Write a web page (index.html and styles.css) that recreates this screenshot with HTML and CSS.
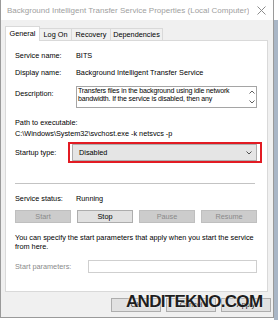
FILE: index.html
```html
<!DOCTYPE html>
<html lang="en">
<head>
  <meta charset="UTF-8" />
  <title>Background Intelligent Transfer Service Properties</title>
  <link rel="stylesheet" href="styles.css">
</head>
<body>

<div class="desktop">
  <div class="window">
    <div class="titlebar">
      <span class="title">Background Intelligent Transfer Service Properties (Local Computer)</span>
      <svg class="close" width="9" height="9" viewBox="0 0 9 9">
        <path d="M0.5 0.5 L8.5 8.5 M8.5 0.5 L0.5 8.5" stroke="#8c8c8c" stroke-width="1" fill="none"/>
      </svg>
    </div>

    <div class="tabs">
      <div class="tab active tab-general">General</div>
      <div class="tab tab-logon">Log On</div>
      <div class="tab tab-recovery">Recovery</div>
      <div class="tab tab-deps">Dependencies</div>
    </div>

    <div class="panel">
      <div class="row row-name">
        <span class="label">Service name:</span>
        <span class="value">BITS</span>
      </div>
      <div class="row row-display">
        <span class="label">Display name:</span>
        <span class="value">Background Intelligent Transfer Service</span>
      </div>
      <div class="row row-desc">
        <span class="label desc-label">Description:</span>
        <div class="desc-box">
          <div class="desc-text">Transfers files in the background using idle network bandwidth. If the service is disabled, then any</div>
          <div class="desc-scroll">
            <svg width="6" height="4" viewBox="0 0 6 4"><path d="M0.5 3.5 L3 1 L5.5 3.5" stroke="#606060" fill="none"/></svg>
            <svg width="6" height="4" viewBox="0 0 6 4"><path d="M0.5 0.5 L3 3 L5.5 0.5" stroke="#606060" fill="none"/></svg>
          </div>
        </div>
      </div>
      <div class="path-label">Path to executable:</div>
      <div class="path-value">C:\Windows\System32\svchost.exe -k netsvcs -p</div>
      <div class="row row-startup">
        <span class="label startup-label">Startup type:</span>
        <div class="highlight">
          <div class="select">
            <span>Disabled</span>
            <svg width="6" height="4" viewBox="0 0 6 4"><path d="M0.5 0.5 L3 3 L5.5 0.5" stroke="#505050" fill="none"/></svg>
          </div>
        </div>
      </div>
      <div class="separator"></div>
      <div class="row row-status">
        <span class="label">Service status:</span>
        <span class="value">Running</span>
      </div>
      <div class="service-buttons">
        <div class="btn disabled">Start</div>
        <div class="btn">Stop</div>
        <div class="btn disabled">Pause</div>
        <div class="btn disabled">Resume</div>
      </div>
      <p class="hint">You can specify the start parameters that apply when you start the service from here.</p>
      <div class="row row-params">
        <span class="label params-label">Start parameters:</span>
        <div class="params-input"></div>
      </div>
    </div>

    <div class="actions">
      <div class="btn">OK</div>
      <div class="btn">Cancel</div>
      <div class="btn">Apply</div>
    </div>

    <div class="watermark">ANDITEKNO.COM</div>
  </div>
  <div class="strip"></div>
</div>

</body>
</html>
```

FILE: styles.css
```css
body {
  margin: 0;
  padding: 0;
  background: #ffffff;
  font-family: "Liberation Sans", Arial, sans-serif;
  font-size: 7.3px;
  line-height: 9px;
  color: #000;
}

.desktop {
  display: flex;
  width: 278px;
  height: 320px;
  overflow: hidden;
}

.window {
  position: relative;
  width: 272px;
  height: 317px;
  background: #f0f0f0;
  border: 1px solid #9a9a9a;
  border-top: none;
}

.strip {
  margin-top: 20px;
  width: 4px;
  height: 300px;
  background: #a9b6c6;
}

/* title bar */
.titlebar {
  height: 20px;
  background: #ffffff;
  display: flex;
  align-items: center;
  padding: 0 7px 0 6px;
}

.title {
  font-size: 8px;
  color: #a0a0a0;
  white-space: nowrap;
  overflow: hidden;
}

.close {
  display: block;
  flex-shrink: 0;
  margin: 1px 0 0 auto;
}

/* tabs */
.tabs {
  display: flex;
  align-items: flex-end;
  height: 14px;
  margin-top: 6px;
  padding-left: 4px;
}

.tab {
  height: 12px;
  line-height: 12px;
  text-align: center;
  border: 1px solid #d9d9d9;
  border-bottom: none;
  border-left: none;
  box-sizing: border-box;
  background: #f0f0f0;
}

.tab.active {
  position: relative;
  z-index: 1;
  height: 15px;
  line-height: 14px;
  margin-bottom: -1px;
  background: #ffffff;
  border-left: 1px solid #d9d9d9;
}

.tab-general { width: 35px; }
.tab-logon { width: 32px; }
.tab-recovery { width: 39px; }
.tab-deps { width: 52px; }

/* panel */
.panel {
  margin-left: 4px;
  width: 263px;
  height: 252px;
  box-sizing: border-box;
  background: #ffffff;
  border: 1px solid #d9d9d9;
  padding: 0 10px 0 9px;
}

.row {
  display: flex;
  align-items: flex-start;
}

.label {
  width: 61px;
  flex-shrink: 0;
  white-space: nowrap;
}

.value {
  white-space: nowrap;
}

.row-name { margin-top: 10px; }
.row-display { margin-top: 8px; }

.row-desc {
  margin-top: 9px;
  height: 22px;
}

.desc-label {
  padding-top: 3px;
}

.desc-box {
  flex: 1;
  height: 22px;
  box-sizing: border-box;
  border: 1px solid #a5a5a5;
  display: flex;
}

.desc-text {
  flex: 1;
  padding: 0 0 0 1px;
  line-height: 8px;
  font-size: 7px;
  letter-spacing: -0.15px;
  overflow: hidden;
  height: 18px;
}

.desc-scroll {
  width: 9px;
  display: flex;
  flex-direction: column;
  justify-content: space-between;
  align-items: center;
  padding: 3px 0 3px;
}

.desc-scroll svg {
  display: block;
}

.path-label { margin-top: 10px; }
.path-value { margin-top: 2px; white-space: nowrap; }

.row-startup {
  margin-top: 4px;
  align-items: center;
}

.startup-label {
  width: 53px;
}

.highlight {
  width: 194px;
  height: 21px;
  margin-right: -5px;
  box-sizing: border-box;
  border: 2px solid #e21b23;
  padding: 0 3px 0 2px;
}

.select {
  height: 17px;
  box-sizing: border-box;
  background: #e5e5e5;
  border: 1px solid #adadad;
  display: flex;
  align-items: center;
  justify-content: space-between;
  padding: 0 4px 0 6px;
}

.select svg {
  display: block;
}

.separator {
  margin-top: 20px;
  width: 240px;
  height: 1px;
  background: #c3c3c3;
}

.row-status { margin-top: 10px; }

.service-buttons {
  margin-top: 7px;
  display: grid;
  grid-template-columns: repeat(4, 56px);
  gap: 6px;
}

.btn {
  height: 13px;
  line-height: 11px;
  box-sizing: border-box;
  text-align: center;
  background: #e1e1e1;
  border: 1px solid #adadad;
}

.btn.disabled {
  background: #cccccc;
  border-color: #bfbfbf;
  color: #8a8a8a;
}

.hint {
  margin: 10px 0 0;
  line-height: 9px;
}

.row-params {
  margin-top: 9px;
  align-items: center;
}

.params-label {
  width: 73px;
  color: #8a8a8a;
}

.params-input {
  flex: 1;
  height: 13px;
  box-sizing: border-box;
  border: 1px solid #cfcfcf;
  background: #ffffff;
}

/* dialog buttons */
.actions {
  margin-top: 6px;
  display: flex;
  justify-content: flex-end;
  gap: 5px;
  padding-right: 2px;
}

.actions .btn {
  width: 50px;
  height: 14px;
  line-height: 12px;
}

.watermark {
  position: absolute;
  left: 125px;
  top: 292px;
  font-family: "Liberation Sans", Arial, sans-serif;
  font-weight: bold;
  font-size: 17px;
  line-height: 20px;
  letter-spacing: -0.7px;
  color: #1e1e1e;
  text-shadow: 0 0 2px #ffffff;
  white-space: nowrap;
}
```
